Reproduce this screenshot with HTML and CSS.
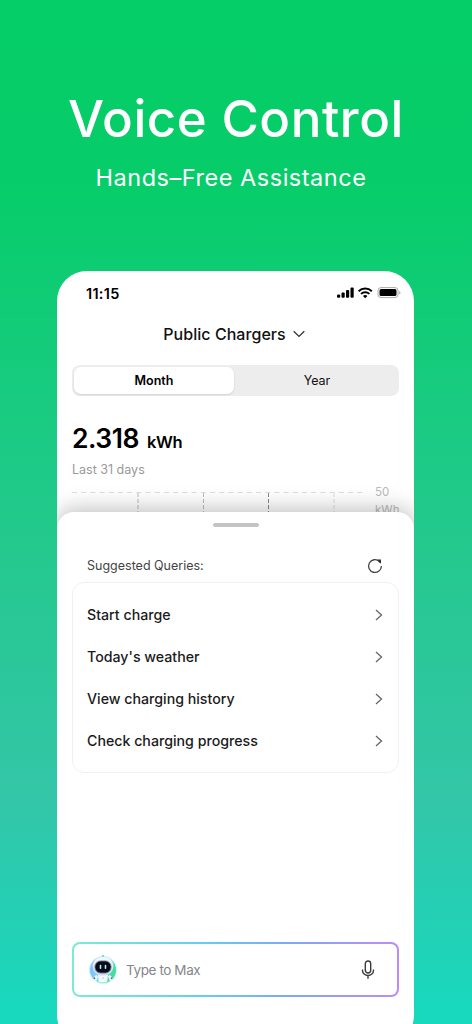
FILE: index.html
```html
<!DOCTYPE html>
<html lang="en">
<head>
<meta charset="utf-8">
<title>Voice Control</title>
<link rel="stylesheet" href="styles.css">
</head>
<body>
<main class="poster">
  <h1 class="headline">Voice Control</h1>
  <p class="tagline">Hands–Free Assistance</p>
  <section class="phone">
    <div class="status">
      <span class="time">11:15</span>
      <svg class="signals" width="64" height="12" viewBox="0 0 64 12">
        <rect x="0" y="7.5" width="3.2" height="3.2" rx="1"/>
        <rect x="4.5" y="5.5" width="3.2" height="5.2" rx="1"/>
        <rect x="9" y="3" width="3.2" height="7.7" rx="1"/>
        <rect x="13.5" y="0.6" width="3.2" height="10.1" rx="1"/>
        <path d="M21.6 4.2a9.6 9.6 0 0 1 13.2 0M24 6.9a6 6 0 0 1 8.4 0" fill="none" stroke="#000" stroke-width="1.9"/>
        <path d="M26 9a3.2 3.2 0 0 1 4.4 0l-2.2 2.2z"/>
        <rect x="41" y="0.6" width="20" height="10" rx="3" fill="#fff" stroke="#aaa"/>
        <rect x="42.5" y="2.1" width="17" height="7" rx="1.6"/>
        <path d="M62.2 4v3.4q1.3-.5 1.3-1.7T62.2 4z" fill="#aaa"/>
      </svg>
    </div>
    <div class="picker">
      <span>Public Chargers</span>
      <svg width="14" height="10" viewBox="0 0 14 10"><path d="M1.7 2.2 7 7.4l5.3-5.2" fill="none" stroke="#333" stroke-width="1.3"/></svg>
    </div>
    <div class="segments">
      <span class="segment selected">Month</span>
      <span class="segment">Year</span>
    </div>
    <div class="reading"><span class="amount">2.318</span><span class="unit">kWh</span></div>
    <div class="period">Last 31 days</div>
    <div class="chart">
      <svg width="292" height="22" viewBox="0 0 292 22" fill="none">
        <path d="M0 1.5h291" stroke="#dedede" stroke-dasharray="5 4.2"/>
        <path d="M66 2v20M131.500 2v20" stroke="#bbb" stroke-dasharray="4 2"/>
        <path d="M196.500 2v20" stroke="#888" stroke-dasharray="4 2"/>
        <path d="M262 2v20" stroke="#ddd" stroke-dasharray="4 2"/>
      </svg>
      <span class="scale">50<br>kWh</span>
    </div>
    <div class="sheet">
      <div class="handle"></div>
      <div class="sheet-head">
        <span class="sheet-title">Suggested Queries<i>:</i></span>
        <svg width="16" height="16" viewBox="0 0 16 16"><path d="M12.300 3.300A6.400 6.400 0 1 0 14.400 8" fill="none" stroke="#444" stroke-width="1.300"/><path d="M10.200 1.600h3.800v3.800l-2-.8z" fill="#333"/></svg>
      </div>
      <ul class="queries">
        <li><span>Start charge</span><svg width="8" height="12" viewBox="0 0 8 12"><path d="m1 1 5.500 5L1 11"/></svg></li>
        <li><span>Today's weather</span><svg width="8" height="12" viewBox="0 0 8 12"><path d="m1 1 5.500 5L1 11"/></svg></li>
        <li><span>View charging history</span><svg width="8" height="12" viewBox="0 0 8 12"><path d="m1 1 5.500 5L1 11"/></svg></li>
        <li><span>Check charging progress</span><svg width="8" height="12" viewBox="0 0 8 12"><path d="m1 1 5.500 5L1 11"/></svg></li>
      </ul>
      <div class="prompt">
        <svg class="bot" width="28" height="30" viewBox="0 0 28 30">
          <defs>
            <linearGradient id="disc" x1="0" x2="1" y1=".3" y2=".7"><stop offset=".1" stop-color="#83bdfb"/><stop offset=".5" stop-color="#7be5e8"/><stop offset=".85" stop-color="#42dda0"/></linearGradient>
            <linearGradient id="shell" x1="0" x2="0" y1="0" y2="1"><stop offset="0" stop-color="#f6f9fb"/><stop offset="1" stop-color="#cfdbe6"/></linearGradient>
          </defs>
          <circle cx="14" cy="16" r="14" fill="#cdf6f6"/>
          <circle cx="14" cy="16" r="13" fill="url(#disc)"/>
          <circle cx="14" cy="2" r="1.300" fill="#79dfe8"/>
          <path d="M7.500 21q-3 1-3 5l2.500 1.500 2-5zM20.500 21q3 1 3 5L21 27.500l-2-5z" fill="#eef3f7"/>
          <path d="M4.800 23.500l1.200 1.300M23.200 23.500l-1.200 1.300" stroke="#555c6c" stroke-width="1.200"/>
          <path d="M9 20h10l-.8 7.800q-4.200 1.500-8.400 0z" fill="#f6f9fc"/>
          <rect x="3.600" y="3" width="20.800" height="18.500" rx="9.200" fill="url(#shell)"/>
          <rect x="6" y="7" width="16" height="12" rx="5.600" fill="#080c18" stroke="#696e9a" stroke-width=".9"/>
          <path d="M11.500 11.500v2.800M16.500 11.500v2.800" stroke="#a9f1ff" stroke-width="1.600" stroke-linecap="round"/>
          <circle cx="14" cy="24" r=".9" fill="#9beee8"/>
        </svg>
        <span class="placeholder">Type to Max</span>
        <svg class="mic" width="14" height="20" viewBox="0 0 14 20" fill="none" stroke="#3c3c40" stroke-width="1.400"><rect x="4.300" y="1" width="5.400" height="12" rx="2.700"/><path d="M1.500 9.500v1a5.500 5 0 0 0 11 0v-1M7 15.500v3.300"/></svg>
      </div>
    </div>
  </section>
</main>
</body>
</html>
```
FILE: styles.css
```css
* { box-sizing: border-box; }
body { margin: 0; font-family: Inter, "Liberation Sans", sans-serif; color: #111; }
svg { display: block; flex: none; }
.poster {
  height: 1024px; overflow: hidden; display: flex; flex-direction: column; align-items: center;
  background: linear-gradient(#05cd67 0, #06cd69 180px, #18cb80 400px, #27c892 590px, #33c6a8 800px, #18d8be 1010px);
}
.headline { margin: 88px 0 0; height: 62px; line-height: 62px; font-size: 51px; font-weight: 500; letter-spacing: .550px; color: #fff; white-space: nowrap; }
.tagline { margin: 13px 0 0; padding-right: 10px; height: 30px; line-height: 30px; font-size: 23.500px; letter-spacing: .520px; color: #fff; white-space: nowrap; }
.phone {
  flex: none; width: 357px; height: 784px; margin: 78px 1px 0 0; padding: 0 15px;
  border-radius: 30px 30px 42px 42px; background: #fff; overflow: hidden;
}
.status { height: 45px; padding: 0 0 0 14px; display: flex; align-items: center; justify-content: space-between; }
.time { font-size: 14.500px; font-weight: 600; color: #000; letter-spacing: .300px; }
.signals { margin-right: -1.500px; margin-bottom: 1px; }
.picker { height: 36px; display: flex; align-items: center; justify-content: center; gap: 6px; font-size: 16px; font-weight: 500; letter-spacing: .050px; padding-right: 2px; }
.segments { margin-top: 13px; height: 31px; padding: 2px; border-radius: 8px; background: #ededed; display: flex; font-size: 12.500px; line-height: 28px; text-align: center; }
.segment { width: 163px; padding-left: 3px; }
.segment.selected { width: 160px; padding-left: 0; border-radius: 7px; background: #fff; font-weight: 600; color: #000; box-shadow: 0 1px 2px rgba(0,0,0,.12); }
.reading { margin-top: 25px; height: 34px; line-height: 34px; white-space: nowrap; color: #000; }
.amount { display: inline-block; width: 75px; font-size: 26.500px; font-weight: 600; letter-spacing: -.500px; }
.unit { font-size: 16.500px; font-weight: 600; letter-spacing: -.400px; }
.period { margin-top: 6px; height: 18px; line-height: 18px; font-size: 12.500px; color: #999; }
.chart { margin-top: 12px; height: 21px; display: flex; justify-content: space-between; }
.scale { width: 24px; height: 36px; margin-top: -8px; font-size: 11.500px; line-height: 18px; color: #bbb; }
.sheet { position: relative; height: 543px; margin: 0 -15px; padding: 11px 15px 0; border-radius: 17px 17px 0 0; background: #fff; box-shadow: 0 -3px 22px rgba(0,0,0,.26); }
.handle { width: 46px; height: 4px; border-radius: 2px; background: #c4c4c6; margin: 0 auto; }
.sheet-head { margin-top: 29px; height: 20px; padding: 0 16px 0 15px; display: flex; align-items: center; justify-content: space-between; font-size: 12.500px; color: #444; }
.sheet-title { padding-bottom: 1px; }
.sheet-title i { font-style: normal; }
.queries { list-style: none; margin: 6px 0 0; padding: 11px 15px 0 14px; height: 191px; border: 1px solid #f0f0f0; border-radius: 12px; font-size: 14.200px; font-weight: 500; color: #1b1b1b; }
.queries li { height: 42px; display: flex; align-items: center; justify-content: space-between; }
.queries span { padding-bottom: 1px; }
.queries path { fill: none; stroke: #666; stroke-width: 1.300; }
.prompt {
  margin-top: 169px; height: 55px; padding: 0 22px 0 15px; display: flex; align-items: center; border: 2px solid transparent; border-radius: 8px;
  background: linear-gradient(#fff, #fff) padding-box, linear-gradient(90deg, #7eead3, #66cdf0 40%, #7ba9fb 65%, #bd8bf8) border-box;
}
.placeholder { margin-left: 9px; font-size: 13.500px; letter-spacing: -.400px; color: #85868a; flex: 1; }
.bot { margin-bottom: 2px; }
```
